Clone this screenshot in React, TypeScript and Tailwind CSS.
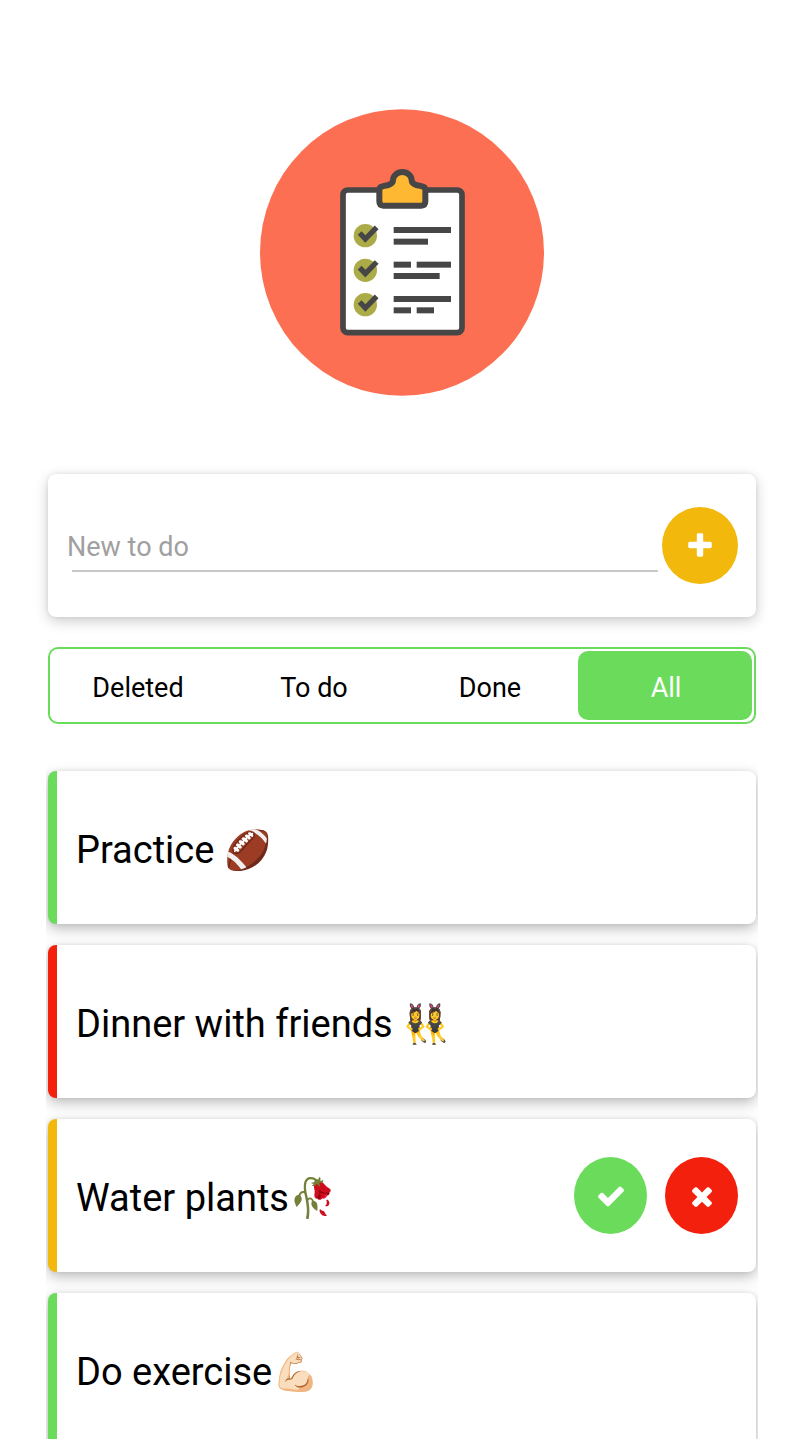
import { useState } from "react";

type Status = "Deleted" | "To do" | "Done";
type Filter = Status | "All";
type Todo = { id: number; text: string; emoji: string; status: Status };

const filters: Filter[] = ["Deleted", "To do", "Done", "All"];

const initialTodos: Todo[] = [
  { id: 1, text: "Practice ", emoji: "🏈", status: "Done" },
  { id: 2, text: "Dinner with friends ", emoji: "👯‍♀️", status: "Deleted" },
  { id: 3, text: "Water plants", emoji: "🥀", status: "To do" },
  { id: 4, text: "Do exercise", emoji: "💪🏻", status: "Done" },
];

const accents: Record<Status, string> = {
  Done: "border-[#6bdb5b]",
  Deleted: "border-[#f3200d]",
  "To do": "border-[#f2b80c]",
};

const plusPath =
  "M1600 736v192q0 40-28 68t-68 28h-416v416q0 40-28 68t-68 28h-192q-40 0-68-28t-28-68v-416h-416q-40 0-68-28t-28-68v-192q0-40 28-68t68-28h416v-416q0-40 28-68t68-28h192q40 0 68 28t28 68v416h416q40 0 68 28t28 68z";
const checkPath =
  "M1671 566q0 40-28 68l-724 724-136 136q-28 28-68 28t-68-28l-136-136-362-362q-28-28-28-68t28-68l136-136q28-28 68-28t68 28l294 295 656-657q28-28 68-28t68 28l136 136q28 28 28 68z";
const timesPath =
  "M1490 1322q0 40-28 68l-136 136q-28 28-68 28t-68-28l-294-294-294 294q-28 28-68 28t-68-28l-136-136q-28-28-28-68t28-68l294-294-294-294q-28-28-28-68t28-68l136-136q28-28 68-28t68 28l294 294 294-294q28-28 68-28t68 28l136 136q28 28 28 68t-28 68l-294 294 294 294q28 28 28 68z";

function Icon({ d }: { d: string }) {
  return (
    <svg viewBox="0 0 1792 1792" className="size-[30px] fill-white" aria-hidden="true">
      <path d={d} />
    </svg>
  );
}

function Logo() {
  return (
    <svg viewBox="0 0 852 861" className="h-[287px] w-[284px]" aria-hidden="true">
      <ellipse cx="426" cy="430.5" rx="426" ry="430" fill="#fd6f52" />
      <g transform="translate(180 138)">
        <rect x="69" y="105" width="357" height="428" rx="14" fill="#fff" stroke="#464646" strokeWidth="17" />
        <path
          d="M178 103q1-6 7-8q5-2 18-4q16-5 16-15a28 25 0 0 1 56 0q0 10 16 15q13 2 18 4q6 2 7 8v36q0 13-12 13h-114q-12 0-12-13z"
          fill="#ffb832"
          stroke="#464646"
          strokeWidth="18"
          strokeLinejoin="round"
        />
        {[242, 346, 449].map((y) => (
          <g key={y} transform={`translate(136 ${y})`}>
            <circle r="35" fill="#abab47" />
            <path d="M-17-8L0 10L34-25" fill="none" stroke="#464646" strokeWidth="16" />
          </g>
        ))}
        <g fill="#464646">
          <rect x="221" y="216" width="172" height="18" />
          <rect x="221" y="251" width="103" height="18" />
          <rect x="221" y="320" width="52" height="18" />
          <rect x="290" y="320" width="103" height="18" />
          <rect x="221" y="354" width="138" height="18" />
          <rect x="221" y="423" width="172" height="18" />
          <rect x="221" y="457" width="52" height="18" />
          <rect x="290" y="457" width="52" height="18" />
        </g>
      </g>
    </svg>
  );
}

export default function App() {
  const [todos, setTodos] = useState(initialTodos);
  const [filter, setFilter] = useState<Filter>("All");
  const [draft, setDraft] = useState("");

  const visible = todos.filter((t) => filter === "All" || t.status === filter);
  const setStatus = (id: number, status: Status) =>
    setTodos(todos.map((t) => (t.id === id ? { ...t, status } : t)));
  const add = () => {
    if (!draft.trim()) return;
    setTodos([...todos, { id: Date.now(), text: draft.trim(), emoji: "", status: "To do" }]);
    setDraft("");
  };

  return (
    <main className="flex h-screen flex-col bg-white px-12 pt-[109px] font-['Roboto',sans-serif] text-black">
      <div className="flex shrink-0 justify-center">
        <Logo />
      </div>

      <form
        onSubmit={(e) => {
          e.preventDefault();
          add();
        }}
        className="mt-[78px] flex shrink-0 items-center rounded-lg bg-white px-[18px] py-[33px] shadow-[0_0_4px_rgba(0,0,0,0.08),0_4px_14px_rgba(0,0,0,0.2)]"
      >
        <div className="min-w-0 flex-1">
          <input
            aria-label="New to do"
            placeholder="New to do"
            value={draft}
            onChange={(e) => setDraft(e.target.value)}
            className="block h-[50px] w-full pt-1 pl-px text-[27px] outline-none placeholder:text-[#a0a0a0]"
          />
          <div className="mr-1 ml-[6px] h-[2px] bg-[#c8c8c8]" />
        </div>
        <button
          type="submit"
          aria-label="Add"
          className="flex h-[77px] w-[76px] shrink-0 items-center justify-center rounded-[50%] bg-[#f2b80c]"
        >
          <Icon d={plusPath} />
        </button>
      </form>

      <div className="mt-[30px] grid h-[77px] shrink-0 grid-cols-4 rounded-[10px] border-2 border-[#6bdb5b] py-[2px]">
        {filters.map((f) => (
          <button
            key={f}
            type="button"
            aria-pressed={f === filter}
            onClick={() => setFilter(f)}
            className={
              f === filter
                ? "mr-[2px] rounded-[10px] bg-[#6bdb5b] pt-[6px] pl-[2px] text-[27px] text-white"
                : "rounded-[10px] pt-[6px] text-[27px]"
            }
          >
            {f}
          </button>
        ))}
      </div>

      <ul className="-mx-[2px] mt-[37px] flex min-h-0 flex-1 flex-col gap-[21px] overflow-y-auto px-[2px] pt-[10px] [scrollbar-width:none]">
        {visible.map((t) => (
          <li
            key={t.id}
            className={`flex h-[153px] shrink-0 items-center justify-between rounded-lg border-l-[9px] bg-white pr-[18px] pl-[19px] shadow-[0_0_4px_rgba(0,0,0,0.08),0_5px_14px_rgba(0,0,0,0.26)] ${accents[t.status]}`}
          >
            <span className="pt-1 text-[38px] leading-[44px] whitespace-pre">
              {t.text}
              {t.emoji}
            </span>
            {t.status === "To do" && (
              <span className="flex gap-[18px]">
                <button
                  type="button"
                  aria-label="Mark as done"
                  onClick={() => setStatus(t.id, "Done")}
                  className="flex h-[77px] w-[73px] items-center justify-center rounded-[50%] bg-[#6bdb5b]"
                >
                  <Icon d={checkPath} />
                </button>
                <button
                  type="button"
                  aria-label="Delete"
                  onClick={() => setStatus(t.id, "Deleted")}
                  className="flex h-[77px] w-[73px] items-center justify-center rounded-[50%] bg-[#f3200d]"
                >
                  <Icon d={timesPath} />
                </button>
              </span>
            )}
          </li>
        ))}
      </ul>
    </main>
  );
}
